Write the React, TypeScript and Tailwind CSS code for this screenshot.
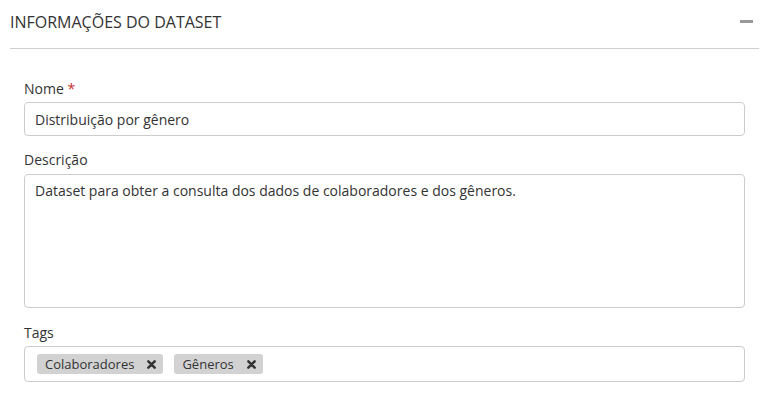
import React from "react";

const font = { fontFamily: '"Open Sans", "Noto Sans", sans-serif' };

function Tag({ label }: { label: string }) {
  return (
    <span className="inline-flex items-center h-[20px] pl-[8px] pr-[7px] rounded-[3px] bg-[#d2d2d2] text-[13px] text-[#333] leading-[20px]">
      {label}
      <svg width="9" height="9" viewBox="0 0 10 10" className="ml-[13px]">
        <path d="M1.5 1.5 L8.5 8.5 M8.5 1.5 L1.5 8.5" stroke="#333" strokeWidth="2.8" strokeLinecap="round" />
      </svg>
    </span>
  );
}

export default function App() {
  return (
    <div className="w-[772px] h-[396px] bg-white overflow-hidden text-[#333]" style={font}>
      {/* header */}
      <div className="mx-[10px] w-[749px] h-[49px] flex items-center justify-between border-b border-[#cfcfcf]">
        <h2 className="text-[16px] leading-[20px] text-[#333] mt-[-4px]">INFORMAÇÕES DO DATASET</h2>
        <div className="w-[13px] h-[3px] bg-[#999] mr-[6px] mt-[-5px]" />
      </div>

      <div className="pl-[24px] pr-[27px] pt-[30px]">
        {/* Nome */}
        <div className="mb-[14px]">
          <label className="block text-[14px] leading-[20px] mb-[3px]">
            Nome <span className="text-[#c9302c]">*</span>
          </label>
          <div className="h-[34px] border border-[#ccc] rounded-[4px] px-[10px] flex items-center text-[14px]">
            Distribuição por gênero
          </div>
        </div>

        {/* Descrição */}
        <div className="mb-[15px]">
          <label className="block text-[14px] leading-[20px] mb-[4px]">Descrição</label>
          <div className="h-[134px] border border-[#ccc] rounded-[4px] px-[10px] pt-[6px] text-[14px] leading-[20px]">
            Dataset para obter a consulta dos dados de colaboradores e dos gêneros.
          </div>
        </div>

        {/* Tags */}
        <div>
          <label className="block text-[14px] leading-[20px] mb-[3px]">Tags</label>
          <div className="h-[36px] border border-[#ccc] rounded-[4px] pl-[12px] flex items-center gap-[11px]">
            <Tag label="Colaboradores" />
            <Tag label="Gêneros" />
          </div>
        </div>
      </div>
    </div>
  );
}
